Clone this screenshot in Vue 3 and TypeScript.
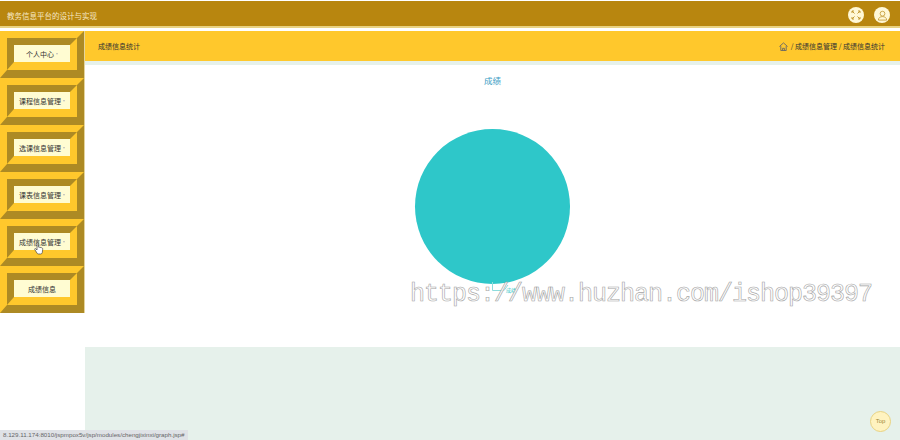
<script setup lang="ts">
interface MenuItem {
  label: string
  arrow: boolean
}

const menu: MenuItem[] = [
  { label: '个人中心', arrow: true },
  { label: '课程信息管理', arrow: true },
  { label: '选课信息管理', arrow: true },
  { label: '课表信息管理', arrow: true },
  { label: '成绩信息管理', arrow: true },
  { label: '成绩信息', arrow: false },
]
</script>

<template>
  <div class="page">
    <header class="topbar">
      <span class="site-title">教务信息平台的设计与实现</span>
      <div class="top-icons">
        <span class="round-icon">
          <svg width="10" height="10" viewBox="0 0 10 10" fill="none" stroke="#c39a34" stroke-width="1">
            <path d="M1 1l2.500 2.500M9 1L6.500 3.500M1 9l2.500-2.500M9 9L6.500 6.500M1 3V1h2M7 1h2v2M1 7v2h2M7 9h2V7" />
          </svg>
        </span>
        <span class="round-icon">
          <svg width="11" height="11" viewBox="0 0 12 12" fill="none" stroke="#c39a34" stroke-width=".9">
            <circle cx="6" cy="4" r="2.600" />
            <path d="M1.500 11c0-2.500 2-3.800 4.500-3.800s4.500 1.300 4.500 3.800z" />
          </svg>
        </span>
      </div>
    </header>

    <div class="body">
      <aside class="sidebar">
        <div v-for="item in menu" :key="item.label" class="bevel-outer">
          <div class="bevel-inner">
            <div class="menu-label">
              {{ item.label }}
              <span v-if="item.arrow" class="caret"></span>
            </div>
          </div>
        </div>
      </aside>

      <main class="main">
        <div class="crumb-bar">
          <span class="crumb-title">成绩信息统计</span>
          <span class="crumbs">
            <svg width="9" height="9" viewBox="0 0 10 10" fill="none" stroke="#666" stroke-width="1">
              <path d="M0.500 5L5 1l4.500 4M2 4.500V9.500h6V4.500M4 9.500V7h2v2.500" />
            </svg>
            <span>/ 成绩信息管理 / 成绩信息统计</span>
          </span>
        </div>
        <div class="chart-area">
          <div class="chart-title">成绩</div>
          <div class="pie-wrap">
            <div class="pie"></div>
            <svg class="pie-leader" width="20" height="12" viewBox="0 0 20 12" fill="none" stroke="#8fdcdc">
              <path d="M0.500 0V8.500H12L16 3" />
            </svg>
            <span class="pie-label">成绩</span>
          </div>
        </div>
        <div class="footer-band"></div>
      </main>
    </div>

    <div class="watermark">https://www.huzhan.com/ishop39397</div>
    <div class="status-url">8.129.11.174:8010/jspmpox5v/jsp/modules/chengjixinxi/graph.jsp#</div>
    <div class="to-top">Top</div>
    <svg class="hand" width="10" height="13" viewBox="0 0 10 13">
      <path d="M3 1.200c0-.8 1.300-.8 1.300 0V5l3 .6c1 .2 1.500.7 1.400 1.700L8.300 10.500c-.1.800-.6 1.500-1.600 1.500H4.500c-.7 0-1.100-.3-1.500-.9L.8 7.600c-.5-.8.400-1.400 1-.8L3 8z" fill="#fff" stroke="#444" stroke-width=".7" />
    </svg>
  </div>
</template>

<style scoped>
.page {
  position: relative;
  width: 900px;
  height: 440px;
  overflow: hidden;
  background: #fff;
  font-family: "Noto Sans CJK SC", "Liberation Sans", sans-serif;
}

.topbar {
  display: flex;
  justify-content: space-between;
  align-items: center;
  height: 22px;
  margin-top: 1px;
  margin-bottom: 3px;
  padding: 3px 10px 0 7px;
  background: #b8860f;
  border-bottom: 2px solid #e9d382;
}

.site-title {
  font-size: 7.500px;
  color: #f7e8c4;
}

.top-icons {
  display: flex;
  gap: 10px;
}

.round-icon {
  display: flex;
  align-items: center;
  justify-content: center;
  width: 16px;
  height: 16px;
  border-radius: 50%;
  background: #fff8d6;
}

.body {
  display: flex;
  height: 409px;
}

.sidebar {
  display: flex;
  flex-direction: column;
  align-items: stretch;
  width: 85px;
  flex: none;
  align-self: flex-start;
  border-right: 1px solid #e4d49c;
  box-sizing: border-box;
}

.bevel-outer {
  box-sizing: border-box;
  height: 47px;
  border-style: solid;
  border-width: 7px 7px 8px 7px;
  border-color: #ffc82c #ad8a24 #ad8a24 #ffc82c;
}

.bevel-inner {
  box-sizing: border-box;
  height: 100%;
  border-style: solid;
  border-width: 7px 7px 8px 7px;
  border-color: #ad8a24 #ffc82c #ffc82c #ad8a24;
  background: #fffcd2;
}

.menu-label {
  display: flex;
  align-items: center;
  justify-content: center;
  gap: 2px;
  height: 100%;
  font-size: 7px;
  color: #333;
  white-space: nowrap;
}

.caret {
  width: 0;
  height: 0;
  border-left: 1.500px solid transparent;
  border-right: 1.500px solid transparent;
  border-top: 2px solid #bbb;
}

.main {
  flex: 1;
  display: flex;
  flex-direction: column;
  min-width: 0;
}

.crumb-bar {
  display: flex;
  justify-content: space-between;
  align-items: center;
  height: 30px;
  padding: 0 15px 0 13px;
  background: #ffc82c;
  border-bottom: 4px solid #e6f1eb;
  font-size: 7px;
  color: #333;
}

.crumbs {
  display: flex;
  align-items: center;
  gap: 3px;
}

.chart-area {
  height: 282px;
  background: #fff;
  display: flex;
  flex-direction: column;
  align-items: center;
}

.chart-title {
  margin-top: 9px;
  font-size: 8.500px;
  line-height: 12px;
  color: #3a9cc4;
}

.pie-wrap {
  position: relative;
  margin-top: 43px;
  width: 155px;
  height: 155px;
}

.pie {
  width: 155px;
  height: 155px;
  border-radius: 50%;
  background: #2ec7c9;
}

.pie-leader {
  position: absolute;
  left: 77px;
  top: 153px;
}

.pie-label {
  position: absolute;
  left: 91px;
  top: 157px;
  font-size: 5px;
  line-height: 7px;
  color: #2ec7c9;
}

.footer-band {
  flex: 1;
  background: #e6f1eb;
}

.watermark {
  position: absolute;
  left: 410px;
  top: 280px;
  font-family: "Liberation Mono", monospace;
  font-size: 25px;
  line-height: 30px;
  letter-spacing: -1px;
  white-space: nowrap;
  color: #fff;
  opacity: 0.95;
  -webkit-text-stroke: 0.600px #a0a0a0;
}

.status-url {
  position: absolute;
  left: 0;
  bottom: 0;
  height: 10px;
  line-height: 10px;
  padding: 0 3px;
  background: #dfe2e6;
  font-family: "Liberation Sans", sans-serif;
  font-size: 6.200px;
  color: #666;
  white-space: nowrap;
}

.to-top {
  position: absolute;
  left: 870px;
  top: 411px;
  box-sizing: border-box;
  width: 21px;
  height: 21px;
  border-radius: 50%;
  background: #fff3c0;
  border: 1px solid #e9d382;
  font-family: "Liberation Sans", sans-serif;
  font-size: 6px;
  line-height: 19px;
  text-align: center;
  color: #a08a3c;
}

.hand {
  position: absolute;
  left: 34px;
  top: 242px;
}
</style>
